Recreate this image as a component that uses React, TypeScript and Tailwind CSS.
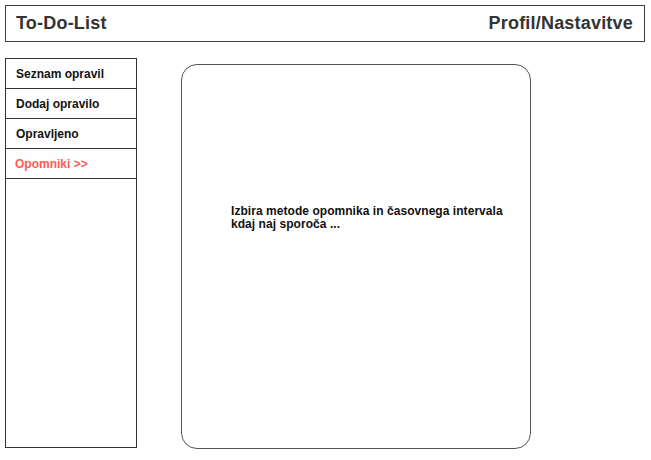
export default function App() {
  const items = ['Seznam opravil', 'Dodaj opravilo', 'Opravljeno']

  return (
    <div className="w-[651px] h-[460px] bg-white font-['Liberation_Sans',Arial,sans-serif] text-[#111] overflow-hidden">
      {/* Header */}
      <div className="ml-[5px] mt-[5px] w-[640px] h-[37px] border border-[#404040] flex items-center justify-between pl-[10px] pr-[11px]">
        <span className="text-[18px] font-bold text-[#333] tracking-[0.2px]">To-Do-List</span>
        <span className="text-[18px] font-bold text-[#333] tracking-[0.2px]">Profil/Nastavitve</span>
      </div>

      <div className="flex mt-[16px] ml-[5px]">
        {/* Sidebar */}
        <div className="w-[132px] h-[390px] border border-[#333] flex flex-col">
          {items.map((item) => (
            <div key={item} className="h-[30px] border-b border-[#333] flex items-center pl-[10px] text-[12px] font-bold">
              {item}
            </div>
          ))}
          <div className="h-[30px] border-b border-[#333] flex items-center pl-[9px] text-[12px] font-bold text-[#ff5c50]">
            Opomniki &gt;&gt;
          </div>
        </div>

        {/* Content */}
        <div className="ml-[44px] mt-[6px] w-[350px] h-[385px] border border-[#555] rounded-[16px] pl-[49px] pt-[140px]">
          <p className="text-[12px] font-bold leading-[13px] w-[290px] tracking-[0.05px]">
            Izbira metode opomnika in časovnega intervala kdaj naj sporoča ...
          </p>
        </div>
      </div>
    </div>
  )
}
